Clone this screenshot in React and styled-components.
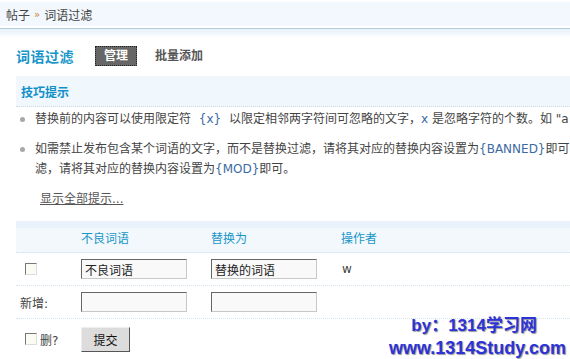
import React from "react";
import styled, { createGlobalStyle } from "styled-components";

const GlobalStyle = createGlobalStyle`
  html, body {
    margin: 0;
    padding: 0;
    background: #fff;
    overflow: hidden;
  }
  body {
    font-family: "DejaVu Sans", "Noto Sans CJK SC", sans-serif;
    font-size: 12px;
    color: #444;
    text-spacing-trim: space-all;
  }
`;

const Page = styled.div`
  position: relative;
  width: 570px;
  height: 359px;
  overflow: hidden;
  padding-top: 2px;
  box-sizing: border-box;
`;

const Crumbs = styled.div`
  height: 24px;
  background: #f2f8fd;
  display: flex;
  align-items: center;
  padding-left: 6px;
  font-size: 12px;
  color: #444;
  gap: 4px;
`;

const Raquo = styled.span`
  color: #c98a3a;
  font-size: 10px;
`;

const Rule = styled.div`
  margin-top: 2px;
  height: 9px;
  border-top: 1px solid #b5cbde;
  background: linear-gradient(#e6f1fa, #fff);
`;

const Content = styled.div`
  padding-left: 16px;
  width: 700px;
`;

const TitleRow = styled.div`
  display: flex;
  align-items: center;
  height: 38px;
  box-sizing: border-box;
  padding-bottom: 2px;
`;

const Title = styled.h3`
  margin: 0 21px 0 0;
  font-size: 14px;
  font-weight: bold;
  color: #1896c8;
  letter-spacing: 0.5px;
`;

const Tab = styled.span`
  font-size: 12px;
  font-weight: bold;
  padding: 0 8px;
  line-height: 18px;
  margin-right: 9px;
  color: ${(p) => (p.$active ? "#fff" : "#555")};
  background: ${(p) => (p.$active ? "#666" : "transparent")};
  border: 1px dotted ${(p) => (p.$active ? "#222" : "transparent")};
`;

const Tips = styled.div`
  background: #f0f7fd;
  height: 30px;
  border-bottom: 1px dotted #cdd9e4;
  display: flex;
  align-items: center;
  padding-left: 5px;
  font-weight: bold;
  color: #1090c8;
  font-size: 12px;
`;

const TipList = styled.ul`
  list-style: none;
  margin: 0;
  padding: 0;
`;

const Tip = styled.li`
  position: relative;
  padding-left: 19px;
  line-height: 20px;
  margin-top: 10px;
  white-space: nowrap;
  &:first-child {
    margin-top: 2px;
  }
  &::before {
    content: "";
    position: absolute;
    left: 4px;
    top: 8px;
    width: 5px;
    height: 5px;
    border-radius: 50%;
    background: #a8a8a8;
  }
`;

const Code = styled.span`
  color: #3b6aa3;
  margin: 0 ${(p) => (p.$gap ? "4px" : "0")};
`;

const ShowAll = styled.a`
  display: inline-block;
  margin: 10px 0 0 24px;
  color: #555;
  text-decoration: underline;
  line-height: 20px;
`;

const Table = styled.div`
  margin-top: 12px;
`;

const Row = styled.div`
  display: grid;
  grid-template-columns: 65px 130px 130px 1fr;
  align-items: center;
  height: ${(p) => p.$h || 33}px;
  border-bottom: ${(p) => (p.$last ? "none" : "1px dotted #d6e2ec")};
  background: ${(p) =>
    p.$head ? "linear-gradient(#e9f2fa 0, #e9f2fa 7px, #f3f8fd 7px)" : "transparent"};
`;

const HeadCell = styled.span`
  color: #1896c8;
  padding-top: 1px;
`;

const Cell = styled.span`
  display: flex;
  align-items: center;
  color: #444;
  padding-left: ${(p) => p.$pl || 0}px;
  gap: 3px;
`;

const Box = styled.span`
  display: inline-block;
  width: 10px;
  height: 10px;
  border: 1px solid;
  border-color: #777 #ddd #ddd #777;
  background: #fbfbf3;
`;

const Input = styled.input`
  box-sizing: border-box;
  width: 106px;
  height: 20px;
  padding: 0 3px;
  border: 1px solid;
  border-color: #666 #c8c8c8 #c8c8c8 #666;
  background: #f9f9f9;
  font-family: inherit;
  font-size: 12px;
  color: #222;
  outline: none;
`;

const Button = styled.button`
  box-sizing: border-box;
  width: 49px;
  height: 25px;
  border: 1px solid #777;
  border-color: #eee #555 #555 #eee;
  background: #dcdcdc;
  font-family: inherit;
  font-size: 12px;
  color: #111;
  padding: 0;
`;

const Mark = styled.div`
  position: absolute;
  right: 4px;
  bottom: 0;
  text-align: right;
  font-family: "Liberation Sans", "Noto Sans CJK SC", sans-serif;
  font-weight: bold;
  color: #2c34d8;
  text-shadow: 1px 1px 1px #999;
  line-height: 22px;
`;

const MarkLine = styled.div`
  font-size: ${(p) => p.$size}px;
  margin-right: ${(p) => p.$mr || 0}px;
`;

export default function App() {
  return (
    <Page>
      <GlobalStyle />
      <Crumbs>
        <span>帖子</span>
        <Raquo>»</Raquo>
        <span>词语过滤</span>
      </Crumbs>
      <Rule />
      <Content>
        <TitleRow>
          <Title>词语过滤</Title>
          <Tab $active>管理</Tab>
          <Tab>批量添加</Tab>
        </TitleRow>
        <Tips>技巧提示</Tips>
        <TipList>
          <Tip>
            替换前的内容可以使用限定符 <Code $gap>{"{x}"}</Code> 以限定相邻两字符间可忽略的文字，<Code>x</Code> 是忽略字符的个数。如 "a{"{1}"}s{"{2}"}s" (不含引号) 可以过滤 "ass" 也可过滤 "axsxs"
          </Tip>
          <Tip>
            如需禁止发布包含某个词语的文字，而不是替换过滤，请将其对应的替换内容设置为<Code>{"{BANNED}"}</Code>即可；如需当用户发布包含某个词语的文字时，需要通过人工审核，而不是直接替换过
            <br />
            滤，请将其对应的替换内容设置为<Code>{"{MOD}"}</Code>即可。
          </Tip>
        </TipList>
        <ShowAll href="#">显示全部提示...</ShowAll>
        <Table>
          <Row $head $h={31}>
            <span />
            <HeadCell>不良词语</HeadCell>
            <HeadCell>替换为</HeadCell>
            <HeadCell>操作者</HeadCell>
          </Row>
          <Row $h={32}>
            <Cell $pl={9}>
              <Box />
            </Cell>
            <Cell>
              <Input defaultValue="不良词语" />
            </Cell>
            <Cell>
              <Input defaultValue="替换的词语" />
            </Cell>
            <Cell $pl={1}>w</Cell>
          </Row>
          <Row $h={32}>
            <Cell $pl={4}>新增:</Cell>
            <Cell>
              <Input />
            </Cell>
            <Cell>
              <Input />
            </Cell>
            <span />
          </Row>
          <Row $h={40} $last>
            <Cell $pl={9}>
              <Box />
              删?
            </Cell>
            <Cell>
              <Button>提交</Button>
            </Cell>
            <span />
            <span />
          </Row>
        </Table>
      </Content>
      <Mark>
        <MarkLine $size={17} $mr={29}>by：1314学习网</MarkLine>
        <MarkLine $size={18}>www.1314Study.com</MarkLine>
      </Mark>
    </Page>
  );
}
